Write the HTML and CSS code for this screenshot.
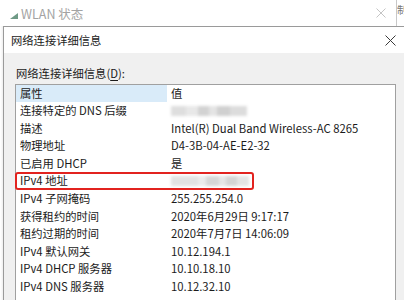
FILE: index.html
```html
<!DOCTYPE html>
<html lang="zh-CN">
<head>
<meta charset="utf-8">
<title>网络连接详细信息</title>
<link rel="stylesheet" href="styles.css">
</head>
<body>
<div class="screen">
  <div class="bgwin">
    <div class="bgtitle">
      <svg class="wifi" width="8" height="6" viewBox="0 0 8 6"><polygon points="0,6 8,6 8,0" fill="#6f9a86"/></svg>
      <span class="bgname">WLAN 状态</span>
    </div>
    <svg class="bgclose" width="10" height="10" viewBox="0 0 10 10"><path d="M0.5 0.5L9.5 9.5M9.5 0.5L0.5 9.5" stroke="#c4c4c4" stroke-width="1"/></svg>
    <div class="bgedge"><span class="frag">制</span></div>
  </div>
  <div class="dialog">
    <div class="titlebar">
      <span class="dtitle">网络连接详细信息</span>
      <svg class="dclose" width="11" height="11" viewBox="0 0 11 11"><path d="M0.5 0.5L10.5 10.5M10.5 0.5L0.5 10.5" stroke="#3a3a3a" stroke-width="1"/></svg>
    </div>
    <div class="dbody">
      <div class="label">网络连接详细信息(<u>D</u>):</div>
      <div class="list">
        <div class="row head"><span class="c1">属性</span><span class="c2">值</span></div>
        <div class="row"><span class="c1">连接特定的 DNS 后缀</span><span class="c2"><span class="blur b1"></span></span></div>
        <div class="row"><span class="c1">描述</span><span class="c2">Intel(R) Dual Band Wireless-AC 8265</span></div>
        <div class="row"><span class="c1">物理地址</span><span class="c2">D4-3B-04-AE-E2-32</span></div>
        <div class="row"><span class="c1">已启用 DHCP</span><span class="c2">是</span></div>
        <div class="row marked"><span class="c1">IPv4 地址</span><span class="c2"><span class="blur b2"></span></span><span class="redbox"></span></div>
        <div class="row"><span class="c1">IPv4 子网掩码</span><span class="c2">255.255.254.0</span></div>
        <div class="row"><span class="c1">获得租约的时间</span><span class="c2">2020年6月29日 9:17:17</span></div>
        <div class="row"><span class="c1">租约过期的时间</span><span class="c2">2020年7月7日 14:06:09</span></div>
        <div class="row"><span class="c1">IPv4 默认网关</span><span class="c2">10.12.194.1</span></div>
        <div class="row"><span class="c1">IPv4 DHCP 服务器</span><span class="c2">10.10.18.10</span></div>
        <div class="row"><span class="c1">IPv4 DNS 服务器</span><span class="c2">10.12.32.10</span></div>
        <div class="row"><span class="c1"></span><span class="c2">10.10.18.10</span></div>
      </div>
    </div>
  </div>
</div>
</body>
</html>
```
FILE: styles.css
```css
html, body {
  margin: 0;
  padding: 0;
  background: #ffffff;
}
.screen {
  width: 404px;
  height: 300px;
  overflow: hidden;
  position: relative;
  font-family: "Noto Sans CJK SC", "Noto Sans", sans-serif;
  font-size: 11.3px;
  color: #1b1b1b;
}
.bgwin {
  height: 26px;
  display: flex;
  align-items: center;
  background: #ffffff;
  position: relative;
}
.bgtitle {
  display: flex;
  align-items: center;
  padding-left: 10px;
  flex: 1;
}
.wifi {
  margin-top: 5px;
  margin-right: 3px;
}
.bgname {
  color: #a3a3a3;
  font-size: 12.5px;
}
.bgclose {
  margin-right: 10px;
}
.bgedge {
  width: 7px;
  height: 26px;
  border-left: 1px solid #c8c8c8;
  overflow: hidden;
}
.frag {
  display: block;
  font-size: 10px;
  line-height: 12px;
  color: #777;
  margin-left: 0;
  margin-top: 4px;
}
.dialog {
  margin-left: 3px;
  width: 420px;
  border-left: 1px solid #9a9a9a;
  border-top: 1px solid #9a9a9a;
  box-shadow: -1px -1px 2px rgba(0,0,0,0.08);
}
.titlebar {
  height: 26px;
  background: #ffffff;
  display: flex;
  align-items: center;
  padding-left: 7px;
}
.dtitle {
  flex: 1;
  font-size: 11.3px;
  color: #1b1b1b;
  margin-top: -1px;
}
.dclose {
  margin-right: 28px;
}
.dbody {
  background: #f0f0f0;
  padding: 11px 0 0 11px;
  height: 260px;
}
.label {
  padding-left: 1px;
  line-height: 18px;
  height: 18px;
}
.label u {
  text-decoration-thickness: 1px;
  text-underline-offset: 2px;
}
.list {
  margin-top: 2px;
  width: 379px;
  height: 240px;
  border: 1px solid #a0a0a0;
  background: #ffffff;
}
.row {
  display: flex;
  height: 17.6px;
  line-height: 17.6px;
  position: relative;
  white-space: nowrap;
}
.row.head {
  height: 17px;
  line-height: 17px;
}
.c1 {
  width: 151px;
  padding-left: 4px;
  box-sizing: border-box;
  flex: none;
}
.c2 {
  padding-left: 4px;
  display: flex;
  align-items: center;
}
.head .c1 {
  background: #d9ebf9;
}
.blur {
  display: block;
  height: 10px;
  filter: blur(1.5px);
}
.b1 {
  width: 76px;
  background: linear-gradient(90deg, #dedede 0 20%, #e8e8e8 20% 35%, #d2d2d2 35% 50%, #e4e4e4 50% 60%, #d0d0d0 60% 78%, #dcdcdc 78% 100%);
}
.b2 {
  width: 78px;
  background: linear-gradient(90deg, #e2e2e2 0 35%, #ebebeb 35% 45%, #d6d6d6 45% 62%, #e6e6e6 62% 70%, #d4d4d4 70% 85%, #e4e4e4 85% 100%);
}
.redbox {
  position: absolute;
  left: -1px;
  top: 0;
  width: 239px;
  height: 18px;
  box-sizing: border-box;
  border: 2px solid #e2231f;
  border-radius: 3px;
}
```
